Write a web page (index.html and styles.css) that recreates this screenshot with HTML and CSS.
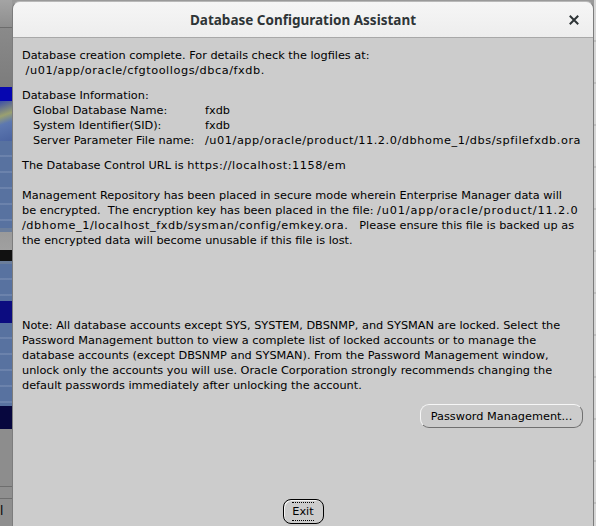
FILE: index.html
```html
<!DOCTYPE html>
<html>
<head>
<meta charset="utf-8">
<link rel="stylesheet" href="styles.css">
</head>
<body>
<div class="screen">
  <div class="desk-left">
    <div class="dl dl-top"></div>
    <div class="dl dl-gray"></div>
    <div class="dl dl-blue"></div>
    <div class="dl dl-rays"></div>
    <div class="dl dl-steel h1"></div>
    <div class="dl dl-widget"></div>
    <div class="dl dl-steel h2"></div>
    <div class="dl dl-dark"></div>
    <div class="dl dl-steel h3"></div>
    <div class="dl dl-navy"></div>
    <div class="dl dl-panel"></div>
    <div class="dl dl-row"></div>
    <div class="dl dl-row last"><span class="glyph">l</span></div>
  </div>
  <div class="dialog">
    <div class="titlebar">
      <span class="title">Database Configuration Assistant</span>
      <svg class="close" width="10" height="10" viewBox="0 0 10 10"><path d="M1.5 1.5 L8.5 8.5 M8.5 1.5 L1.5 8.5" stroke="#2e3436" stroke-width="2" stroke-linecap="square"/></svg>
    </div>
    <div class="content">
      <div class="block first">
        <div class="line">Database creation complete. For details check the logfiles at:</div>
        <div class="line"> <span class="path">/u01/app/oracle/cfgtoollogs/dbca/fxdb.</span></div>
      </div>
      <div class="block gap10">
        <div class="line">Database Information:</div>
        <div class="info">
          <span class="line">Global Database Name:</span><span class="line">fxdb</span>
          <span class="line">System Identifier(SID):</span><span class="line">fxdb</span>
          <span class="line">Server Parameter File name:</span><span class="line path">/u01/app/oracle/product/11.2.0/dbhome_1/dbs/spfilefxdb.ora</span>
        </div>
      </div>
      <div class="block gap10">
        <div class="line">The Database Control URL is <span class="path">https://localhost:1158/em</span></div>
      </div>
      <div class="block gap15">
        <div class="line">Management Repository has been placed in secure mode wherein Enterprise Manager data will</div>
        <div class="line">be encrypted.  The encryption key has been placed in the file: <span class="path wide">/u01/app/oracle/product/11.2.0</span></div>
        <div class="line"><span class="path">/dbhome_1/localhost_fxdb/sysman/config/emkey.ora.</span>   Please ensure this file is backed up as</div>
        <div class="line">the encrypted data will become unusable if this file is lost.</div>
      </div>
      <div class="block gap70">
        <div class="line">Note: All database accounts except SYS, SYSTEM, DBSNMP, and SYSMAN are locked. Select the</div>
        <div class="line">Password Management button to view a complete list of locked accounts or to manage the</div>
        <div class="line">database accounts (except DBSNMP and SYSMAN). From the Password Management window,</div>
        <div class="line">unlock only the accounts you will use. Oracle Corporation strongly recommends changing the</div>
        <div class="line">default passwords immediately after unlocking the account.</div>
      </div>
      <div class="btn-row">
        <button class="btn pw">Password Management...</button>
      </div>
      <div class="exit-row">
        <button class="btn exit"><span class="focus">Exit</span></button>
      </div>
    </div>
  </div>
  <div class="desk-right"></div>
</div>
</body>
</html>
```
FILE: styles.css
```css
html, body {
  margin: 0;
  padding: 0;
  background: #9a9a9a;
}
.screen {
  width: 596px;
  height: 526px;
  display: flex;
  overflow: hidden;
  font-family: "DejaVu Sans", sans-serif;
}
.desk-left {
  width: 12px;
  flex: none;
  display: flex;
  flex-direction: column;
}
.dl { flex: none; }
.dl-top { height: 27px; background: linear-gradient(#a4a4a4, #8e8e8e); border-bottom: 1px solid #6c6c6c; }
.dl-gray { height: 59px; background: linear-gradient(#8a8a8a, #7c7c7c); }
.dl-blue { height: 14px; background: #0606b0; }
.dl-rays { height: 40px; background: linear-gradient(160deg, #3c4fa8 0%, #9aa070 35%, #5d78b0 55%, #4a63a0 100%); }
.dl-steel { background: repeating-linear-gradient(#5872a0 0px, #5872a0 14px, #7f93b8 15px, #5872a0 16px); }
.h1 { height: 87px; }
.dl-widget { height: 36px; background: linear-gradient(#6b7e9c 0, #6b7e9c 4px, #9a9a9a 4px, #a0a0a0 22px, #111 22px, #111 33px, #6b7e9c 33px); }
.h2 { height: 37px; }
.dl-dark { height: 22px; background: #0c0c80; }
.h3 { height: 83px; }
.dl-navy { height: 23px; background: #07073e; }
.dl-panel { height: 57px; background: #8d8d8d; border-bottom: 1px solid #6e6e6e; }
.dl-row { height: 11px; background: #8f8f8f; border-bottom: 1px solid #6e6e6e; }
.dl-row.last { height: 40px; border: none; position: relative; }
.glyph { position: absolute; left: 0; top: 6px; font-size: 12px; line-height: 12px; color: #000; font-family: "DejaVu Sans", sans-serif; }

.desk-right {
  width: 2px;
  flex: none;
  background: repeating-linear-gradient(#d6d6d6 0, #d6d6d6 40px, #a8a8a8 41px, #d6d6d6 42px);
}
.dialog {
  width: 580px;
  height: 524px;
  margin-top: 1px;
  flex: none;
  display: flex;
  flex-direction: column;
  background: #cccccc;
  border: 1px solid #7c7c7c;
  border-top-color: #b9b9b9;
  border-radius: 8px 8px 0 0;
  overflow: hidden;
}
.titlebar {
  height: 35px;
  flex: none;
  display: flex;
  align-items: center;
  justify-content: center;
  position: relative;
  background: linear-gradient(#f6f6f6, #ededed);
  border-bottom: 1px solid #a8a8a8;
}
.title {
  font-family: "Noto Sans", sans-serif;
  font-weight: 700;
  font-size: 13.5px;
  color: #2e3436;
}
.close {
  position: absolute;
  right: 14px;
  top: 13px;
}
.content {
  flex: 1;
  padding: 10px 0 0 9px;
  display: flex;
  flex-direction: column;
  font-size: 11.3px;
  color: #000;
}
.line {
  line-height: 15px;
  white-space: pre;
}
.path { letter-spacing: 0.55px; }
.path.wide { letter-spacing: 0.85px; }
.gap10 { margin-top: 10px; }
.gap15 { margin-top: 15px; }
.gap70 { margin-top: 70px; }
.info {
  display: grid;
  grid-template-columns: 172px auto;
  padding-left: 11px;
}
.btn-row {
  display: flex;
  justify-content: flex-end;
  margin-top: 11px;
  padding-right: 10px;
}
.btn {
  font-family: "DejaVu Sans", sans-serif;
  font-size: 11.3px;
  color: #000;
  background: #cccccc;
  padding: 0;
  margin: 0;
}
.pw {
  width: 163px;
  height: 24px;
  border: 1px solid;
  border-color: #f6f6f6 #707070 #707070 #f6f6f6;
  border-radius: 9px;
}
.exit-row {
  display: flex;
  justify-content: center;
  margin-top: 71px;
  padding-right: 9px;
}
.exit {
  width: 41px;
  height: 25px;
  border: 1px solid #000;
  border-radius: 8px;
  box-shadow: inset 1px 1px 0 #f4f4f4;
  display: flex;
  align-items: center;
  justify-content: center;
}
.focus {
  display: block;
  line-height: 15px;
  padding: 1px 0;
  border-top: 1px dotted #000;
  border-bottom: 1px dotted #000;
}
```
